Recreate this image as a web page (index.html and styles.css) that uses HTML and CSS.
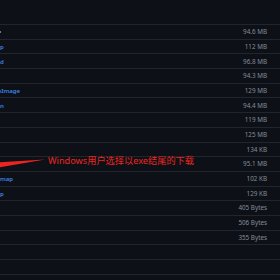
FILE: index.html
```html
<!DOCTYPE html>
<html lang="zh-CN">
<head>
<meta charset="utf-8">
<title>Assets</title>
<link rel="stylesheet" href="styles.css">
</head>
<body>
<div class="page">
  <ul class="assets">
    <li class="row"><span class="name"><span class="mark"></span></span><span class="size">94.6 MB</span></li>
    <li class="row"><span class="name"><a class="link">p</a></span><span class="size">112 MB</span></li>
    <li class="row"><span class="name"><a class="link">d</a></span><span class="size">96.8 MB</span></li>
    <li class="row"><span class="name"></span><span class="size">94.3 MB</span></li>
    <li class="row"><span class="name"><a class="link clip">pImage</a></span><span class="size">129 MB</span></li>
    <li class="row"><span class="name"><a class="link">n</a></span><span class="size">94.4 MB</span></li>
    <li class="row"><span class="name"></span><span class="size">119 MB</span></li>
    <li class="row"><span class="name"></span><span class="size">125 MB</span></li>
    <li class="row"><span class="name"></span><span class="size">134 KB</span></li>
    <li class="row"><span class="name"></span><span class="size">95.1 MB</span></li>
    <li class="row"><span class="name"><a class="link">map</a></span><span class="size">102 KB</span></li>
    <li class="row"><span class="name"><a class="link">p</a></span><span class="size">129 KB</span></li>
    <li class="row"><span class="name"></span><span class="size">405 Bytes</span></li>
    <li class="row"><span class="name"></span><span class="size">506 Bytes</span></li>
    <li class="row"><span class="name"></span><span class="size">355 Bytes</span></li>
    <li class="row"><span class="name"></span><span class="size"></span></li>
    <li class="row"><span class="name"></span><span class="size"></span></li>
    <li class="row"><span class="name"></span><span class="size"></span></li>
  </ul>
  <svg class="arrow" width="50" height="12" viewBox="0 0 50 12">
    <polygon points="0,3.2 45,0.5 0,8.2" fill="#ee2420"/>
  </svg>
  <div class="note">Windows用户选择以exe结尾的下载</div>
</div>
</body>
</html>
```
FILE: styles.css
```css
html, body {
  margin: 0;
  padding: 0;
  background: #0d1117;
  width: 280px;
  height: 280px;
  overflow: hidden;
}
.page {
  position: relative;
  padding-top: 24px;
  font-family: "Noto Sans", "Segoe UI", sans-serif;
}
.assets {
  list-style: none;
  margin: 0;
  padding: 0;
}
.row {
  display: flex;
  align-items: center;
  justify-content: space-between;
  height: 14.7px;
  box-sizing: border-box;
  border-top: 1px solid #21262d;
  padding: 1px 13px 0 0;
  overflow: hidden;
}
.name {
  display: flex;
  align-items: center;
  overflow: hidden;
  white-space: nowrap;
}
.link {
  color: #3f83e6;
  font-size: 6px;
  font-weight: 600;
  line-height: 1;
}
.clip {
  margin-left: -2.6px;
}
.mark {
  display: block;
  width: 1px;
  height: 2px;
  background: #6e7681;
}
.size {
  color: #848d97;
  font-size: 6.3px;
  line-height: 1;
  white-space: nowrap;
}
.arrow {
  position: absolute;
  left: 0;
  top: 158.5px;
  display: block;
}
.note {
  position: absolute;
  left: 48px;
  top: 155px;
  color: #ee2420;
  font-family: "Noto Sans", "Noto Sans CJK SC", sans-serif;
  font-size: 9.2px;
  line-height: 12px;
  white-space: nowrap;
}
```
